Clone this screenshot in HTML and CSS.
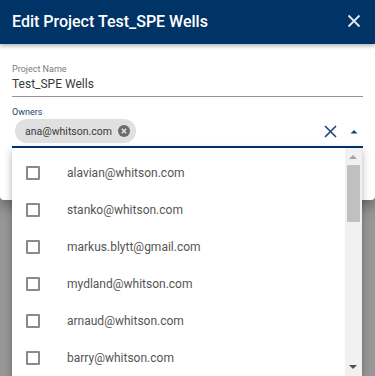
FILE: index.html
```html
<!DOCTYPE html>
<html lang="en">
<head>
    <meta charset="UTF-8">
    <meta name="viewport" content="width=device-width, initial-scale=1.0">
    <title>Edit Project</title>
    <link rel="stylesheet" href="styles.css">
</head>
<body>
    <div class="dialog">
        <!-- Header -->
        <div class="dialog-header">
            <span class="dialog-title">Edit Project Test_SPE Wells</span>
            <svg class="close-icon" width="14" height="14" viewBox="0 0 14 14">
                <path d="M1.5 1.5 L12.5 12.5 M12.5 1.5 L1.5 12.5" stroke="#e4e9ef" stroke-width="1.8" fill="none"/>
            </svg>
        </div>

        <div class="dialog-body">
            <!-- Project name -->
            <div class="field">
                <label class="field-label">Project Name</label>
                <div class="field-value">Test_SPE Wells</div>
            </div>

            <!-- Owners -->
            <div class="field field-active">
                <label class="field-label">Owners</label>
                <div class="select-row">
                    <span class="chip">
                        ana@whitson.com
                        <svg class="chip-remove" width="12" height="12" viewBox="0 0 12 12">
                            <circle cx="6" cy="6" r="6" fill="#6b6b6b"/>
                            <path d="M3.8 3.8 L8.2 8.2 M8.2 3.8 L3.8 8.2" stroke="#e0e0e0" stroke-width="1.6"/>
                        </svg>
                    </span>
                    <span class="select-icons">
                        <svg width="13" height="13" viewBox="0 0 13 13">
                            <path d="M1 1 L12 12 M12 1 L1 12" stroke="#1d4373" stroke-width="1.6" fill="none"/>
                        </svg>
                        <svg width="8" height="5" viewBox="0 0 8 5">
                            <path d="M0.5 4.5 L4 1 L7.5 4.5 Z" fill="#1d4373"/>
                        </svg>
                    </span>
                </div>
            </div>
        </div>
    </div>

    <!-- Dropdown list -->
    <div class="dropdown">
        <ul class="options">
            <li><span class="checkbox"></span>alavian@whitson.com</li>
            <li><span class="checkbox"></span>stanko@whitson.com</li>
            <li><span class="checkbox"></span>markus.blytt@gmail.com</li>
            <li><span class="checkbox"></span>mydland@whitson.com</li>
            <li><span class="checkbox"></span>arnaud@whitson.com</li>
            <li><span class="checkbox"></span>barry@whitson.com</li>
        </ul>
        <div class="scrollbar">
            <span class="arrow-up"></span>
            <span class="thumb"></span>
            <span class="arrow-down"></span>
        </div>
    </div>
</body>
</html>
```

FILE: styles.css
```css
html, body {
    margin: 0;
    height: 100%;
    overflow: hidden;
}
body {
    font-family: Roboto, "Liberation Sans", sans-serif;
    background-color: #979797;
    position: relative;
}
.dialog {
    background-color: #fff;
    height: 200px;
    border-radius: 0 0 4px 4px;
    box-shadow: 0 6px 14px rgba(0, 0, 0, 0.35);
}
.dialog-header {
    height: 44px;
    background-color: #003366;
    color: #fff;
    display: flex;
    align-items: center;
    justify-content: space-between;
    padding: 0 14px 0 12px;
    box-shadow: 0 2px 4px rgba(0, 0, 0, 0.3);
}
.dialog-title {
    font-size: 16px;
    font-weight: 500;
    margin-top: -2px;
}
.close-icon {
    margin-top: -3px;
}
.dialog-body {
    padding: 19px 12px 0 12px;
}
.field {
    border-bottom: 1px solid #949494;
    padding-bottom: 4px;
}
.field-label {
    display: block;
    font-size: 9px;
    color: #7a7a7a;
    line-height: 12px;
}
.field-value {
    font-size: 12px;
    color: #3a3a3a;
    line-height: 16px;
    margin-top: 1px;
}
.field-active {
    margin-top: 9px;
    border-bottom: 2px solid #003366;
    padding-bottom: 3px;
}
.field-active .field-label {
    color: #1d4373;
}
.select-row {
    display: flex;
    align-items: center;
    justify-content: space-between;
    margin-top: 1px;
}
.chip {
    display: inline-flex;
    align-items: center;
    gap: 6px;
    height: 24px;
    padding: 0 6px 0 10px;
    margin-left: 3px;
    border-radius: 12px;
    background-color: #e0e0e0;
    font-size: 10.5px;
    color: #3a3a3a;
}
.select-icons {
    display: flex;
    align-items: center;
    gap: 13px;
    padding-right: 5px;
}
.dropdown {
    position: absolute;
    top: 148px;
    left: 12px;
    width: 350px;
    bottom: 0;
    background-color: #fff;
    box-shadow: 0 3px 8px rgba(0, 0, 0, 0.3);
    display: flex;
}
.options {
    list-style: none;
    margin: 0;
    padding: 6px 0 0 0;
    flex: 1;
    overflow: hidden;
}
.options li {
    height: 37px;
    display: flex;
    align-items: center;
    font-size: 12px;
    color: #555;
}
.checkbox {
    width: 10px;
    height: 10px;
    border: 2px solid #8a8a8a;
    border-radius: 1px;
    margin: 0 27px 0 14px;
}
.scrollbar {
    width: 17px;
    background-color: #f1f1f1;
    position: relative;
}
.arrow-up, .arrow-down {
    position: absolute;
    left: 4px;
    width: 0;
    height: 0;
    border-left: 4.5px solid transparent;
    border-right: 4.5px solid transparent;
}
.arrow-up {
    top: 7px;
    border-bottom: 4px solid #a3a3a3;
}
.arrow-down {
    bottom: 7px;
    border-top: 4px solid #505050;
}
.thumb {
    position: absolute;
    top: 17px;
    left: 2px;
    width: 13px;
    height: 57px;
    background-color: #c1c1c1;
}
```
